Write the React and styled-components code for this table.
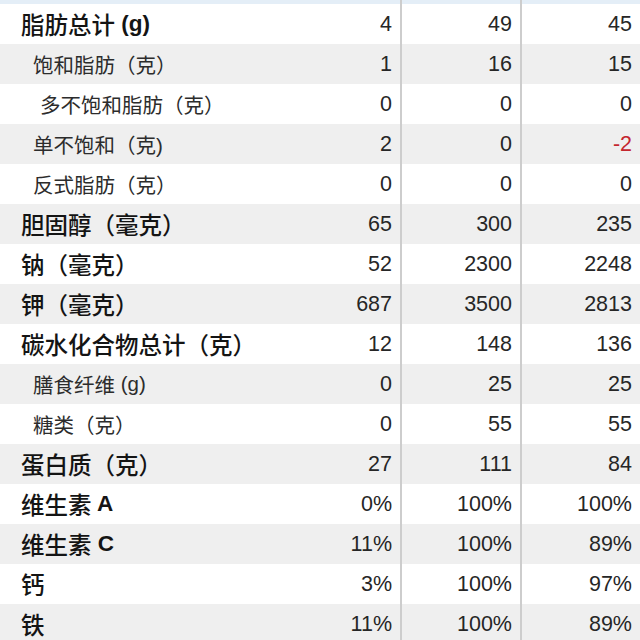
import React from "react";
import styled, { createGlobalStyle } from "styled-components";

const Global = createGlobalStyle`
  html, body { margin: 0; padding: 0; background: #fff; overflow: hidden; }
  #root { width: 640px; height: 640px; overflow: hidden; }
`;

const Table = styled.div`
  width: 640px;
  display: flex;
  flex-direction: column;
`;

const Row = styled.div`
  display: grid;
  grid-template-columns: 1fr 120px 120px 120px;
  height: ${(p) => (p.$strip ? 4 : 40)}px;
  background: ${(p) => (p.$strip ? "#e4eef7" : p.$alt ? "#efefef" : "#ffffff")};
`;

const Label = styled.div`
  display: flex;
  align-items: center;
  padding-left: ${(p) => p.$indent}px;
  font-family: "Liberation Sans", "Noto Sans CJK SC", sans-serif;
  font-size: ${(p) => (p.$main ? 23.5 : 20.5)}px;
  font-weight: ${(p) => (p.$main ? 500 : 400)};
  color: ${(p) => (p.$main ? "#141414" : "#2c2c2c")};
  white-space: pre;
`;

const Latin = styled.span`
  font-weight: ${(p) => (p.$main ? 700 : 400)};
  font-size: ${(p) => (p.$main ? 22.5 : 20.5)}px;
`;

const Value = styled.div`
  display: flex;
  align-items: center;
  justify-content: flex-end;
  padding-right: 8px;
  font-family: "Liberation Sans", Arial, sans-serif;
  font-size: 21.5px;
  color: ${(p) => (p.$neg ? "#c4262e" : "#262626")};
  border-left: ${(p) => (p.$divided ? "2px solid #cdcdcd" : "none")};
`;

const rows = [
  { label: "脂肪总计", latin: " (g)", main: true, indent: 21, v: ["4", "49", "45"] },
  { label: "饱和脂肪（克）", indent: 33, v: ["1", "16", "15"] },
  { label: "多不饱和脂肪（克）", indent: 40, v: ["0", "0", "0"] },
  { label: "单不饱和（克)", indent: 33, v: ["2", "0", "-2"] },
  { label: "反式脂肪（克）", indent: 33, v: ["0", "0", "0"] },
  { label: "胆固醇（毫克）", main: true, indent: 21, v: ["65", "300", "235"] },
  { label: "钠（毫克）", main: true, indent: 21, v: ["52", "2300", "2248"] },
  { label: "钾（毫克）", main: true, indent: 21, v: ["687", "3500", "2813"] },
  { label: "碳水化合物总计（克）", main: true, indent: 21, v: ["12", "148", "136"] },
  { label: "膳食纤维", latin: " (g)", indent: 33, v: ["0", "25", "25"] },
  { label: "糖类（克）", indent: 33, v: ["0", "55", "55"] },
  { label: "蛋白质（克）", main: true, indent: 21, v: ["27", "111", "84"] },
  { label: "维生素", latin: " A", main: true, indent: 21, v: ["0%", "100%", "100%"] },
  { label: "维生素", latin: " C", main: true, indent: 21, v: ["11%", "100%", "89%"] },
  { label: "钙", main: true, indent: 21, v: ["3%", "100%", "97%"] },
  { label: "铁", main: true, indent: 21, v: ["11%", "100%", "89%"] },
];

export default function App() {
  return (
    <>
      <Global />
      <Table>
        <Row $strip>
          <div />
          <div />
          <Value $divided />
          <Value $divided />
        </Row>
        {rows.map((r, i) => (
          <Row key={i} $alt={i % 2 === 1}>
            <Label $main={r.main} $indent={r.indent}>
              {r.label}
              {r.latin && <Latin $main={r.main}>{r.latin}</Latin>}
            </Label>
            {r.v.map((val, j) => (
              <Value key={j} $divided={j > 0} $neg={val.startsWith("-")}>
                {val}
              </Value>
            ))}
          </Row>
        ))}
      </Table>
    </>
  );
}
